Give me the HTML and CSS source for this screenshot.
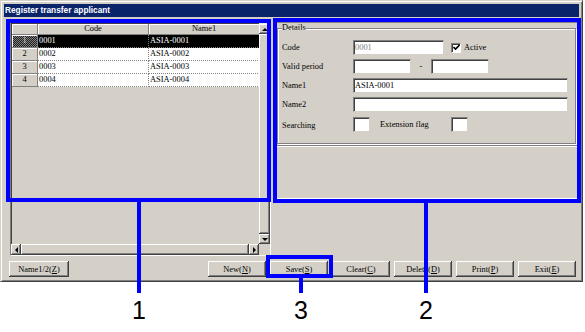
FILE: index.html
```html
<!DOCTYPE html>
<html lang="en">
<head>
  <meta charset="UTF-8">
  <title>Register transfer applicant</title>
  <link rel="stylesheet" href="styles.css">
</head>
<body>
  <div class="window">
    <div class="titlebar">Register transfer applicant</div>
    <div class="client">
      <div class="panes">

        <!-- list of applicants -->
        <div class="grid">
          <div class="cells">
            <div class="hd"></div>
            <div class="hd">Code</div>
            <div class="hd">Name1</div>

            <div class="rowhd current">1</div>
            <div class="cell sel">0001</div>
            <div class="cell sel">ASIA-0001</div>

            <div class="rowhd">2</div>
            <div class="cell">0002</div>
            <div class="cell">ASIA-0002</div>

            <div class="rowhd">3</div>
            <div class="cell">0003</div>
            <div class="cell">ASIA-0003</div>

            <div class="rowhd">4</div>
            <div class="cell">0004</div>
            <div class="cell">ASIA-0004</div>
          </div>
          <div class="vscroll">
            <span class="arrow up"></span>
            <span class="thumb"></span>
            <span class="arrow down"></span>
          </div>
          <div class="hscroll">
            <span class="arrow left"></span>
            <span class="thumb"></span>
            <span class="arrow right"></span>
          </div>
          <div class="sizebox"></div>
        </div>

        <!-- detail form -->
        <div class="details">
          <div class="details-top">
            <fieldset>
              <legend>Details</legend>
              <div class="form">
                <span class="lbl">Code</span>
                <div class="ctl">
                  <span class="field w-code dim">0001</span>
                  <span class="check"><svg width="7" height="7" viewBox="0 0 7 7"><path d="M0.5 3 L2.5 5 L6.5 1" fill="none" stroke="#000" stroke-width="1.6"/></svg></span>
                  <span>Active</span>
                </div>

                <span class="lbl">Valid period</span>
                <div class="ctl">
                  <span class="field w-date"></span>
                  <span class="dash">-</span>
                  <span class="field w-date"></span>
                </div>

                <span class="lbl">Name1</span>
                <div class="ctl"><span class="field w-name">ASIA-0001</span></div>

                <span class="lbl">Name2</span>
                <div class="ctl"><span class="field w-name"></span></div>

                <span class="lbl last">Searching</span>
                <div class="ctl last">
                  <span class="field w-flag"></span>
                  <span class="lbl-inline">Extension flag</span>
                  <span class="field w-flag"></span>
                </div>
              </div>
            </fieldset>
          </div>
        </div>
      </div>

      <div class="buttons">
        <button class="btn wide">Name1/2(<u>Z</u>)</button>
        <div class="btn-group">
          <button class="btn">New(<u>N</u>)</button>
          <button class="btn">Save(<u>S</u>)</button>
          <button class="btn">Clear(<u>C</u>)</button>
          <button class="btn">Delete(<u>D</u>)</button>
          <button class="btn">Print(<u>P</u>)</button>
          <button class="btn">Exit(<u>E</u>)</button>
        </div>
      </div>
    </div>
  </div>

  <!-- callouts -->
  <div class="mark mark-grid"></div>
  <div class="mark mark-details"></div>
  <div class="mark mark-save"></div>
  <div class="lead lead-1"></div>
  <div class="lead lead-2"></div>
  <div class="lead lead-3"></div>
  <span class="num num-1">1</span>
  <span class="num num-3">3</span>
  <span class="num num-2">2</span>
</body>
</html>
```

FILE: styles.css
```css
body {
  margin: 0;
  background: #fff;
  font-family: "Liberation Serif", serif;
  font-size: 8.4px;
  color: #000;
}

.window {
  position: relative;
  box-sizing: border-box;
  width: 583px;
  height: 282px;
  padding: 3px;
  background: #d4d0c8;
  border: 1px solid;
  border-color: #d4d0c8 #404040 #404040 #d4d0c8;
  box-shadow: inset 1px 1px #fff, inset -1px -1px #808080;
}

.titlebar {
  height: 13px;
  line-height: 13px;
  padding-left: 1px;
  background: #0a246a;
  color: #fff;
  font-family: "Liberation Sans", sans-serif;
  font-weight: bold;
  font-size: 8.3px;
}

.client {
  padding: 5px 0 0 6px;
}

.panes {
  display: flex;
  gap: 5px;
}

/* ---- grid ---- */
.grid {
  display: grid;
  grid-template-columns: 248px 11px;
  grid-template-rows: 221px 11px;
  width: 261px;
  height: 234px;
  box-sizing: border-box;
  border: 1px solid;
  border-color: #808080 #fff #fff #808080;
}

.cells {
  display: grid;
  grid-template-columns: 26px 111px 111px;
  grid-template-rows: 11px repeat(4, 13px);
  align-content: start;
  background: #d4d0c8;
  box-shadow: inset 1px 1px #404040;
  padding: 1px 0 0 1px;
}

.hd,
.rowhd {
  box-sizing: border-box;
  text-align: center;
  border-right: 1px solid #808080;
  border-bottom: 1px solid #808080;
  box-shadow: inset 1px 1px #fff;
  line-height: 11px;
}
.hd { line-height: 10px; }

.rowhd.current {
  color: #d4d0c8;
  background: repeating-conic-gradient(#808080 0 25%, #202020 0 50%) 0 0 / 2px 2px;
}

.cell {
  box-sizing: border-box;
  background: #fff;
  padding-left: 1px;
  line-height: 12px;
  border-right: 1px dotted #808080;
  border-bottom: 1px dotted #808080;
}
.cell.sel {
  background: #000;
  color: #fff;
}

.vscroll,
.hscroll {
  display: flex;
  background: #ebe9e3;
}
.vscroll { flex-direction: column; padding-top: 1px; }

.arrow,
.thumb,
.sizebox {
  box-sizing: border-box;
  background: #d4d0c8;
  box-shadow: inset -1px -1px #404040, inset 1px 1px #fff, inset -2px -2px #808080;
}
.vscroll .arrow { height: 10px; }
.hscroll .arrow { width: 10px; }
.thumb { flex: 1; }

.arrow {
  display: flex;
  align-items: center;
  justify-content: center;
}
.arrow::after {
  content: "";
  width: 0;
  height: 0;
  border: 3px solid transparent;
}
.arrow.up::after { border-bottom-color: #000; border-top-width: 0; }
.arrow.down::after { border-top-color: #000; border-bottom-width: 0; }
.arrow.left::after { border-right-color: #000; border-left-width: 0; }
.arrow.right::after { border-left-color: #000; border-right-width: 0; }

.sizebox { box-shadow: none; }

/* ---- details ---- */
.details {
  box-sizing: border-box;
  width: 303px;
  height: 177px;
  border: 1px solid;
  border-color: #808080 #fff #fff #808080;
}

.details-top {
  box-sizing: border-box;
  height: 123px;
  border-bottom: 1px solid #808080;
  box-shadow: 0 1px #fff;
}

fieldset {
  box-sizing: border-box;
  width: 299px;
  height: 121px;
  margin: 0;
  padding: 7px 4px 0 4px;
  border: 1px solid #808080;
  box-shadow: 1px 1px #fff, inset 1px 1px #fff;
}
legend {
  padding: 0;
  line-height: 10px;
}

.form {
  display: grid;
  grid-template-columns: 71px auto;
  grid-auto-rows: 15px;
  row-gap: 4px;
}
.lbl {
  line-height: 15px;
}
.ctl {
  display: flex;
  align-items: center;
}
.last { margin-top: 2px; }

.field {
  box-sizing: border-box;
  height: 15px;
  line-height: 13px;
  padding-left: 1px;
  background: #fff;
  border: 1px solid;
  border-color: #808080 #d4d0c8 #d4d0c8 #808080;
  box-shadow: inset 1px 1px #404040;
}
.field.dim { color: #808080; }
.w-code { width: 91px; }
.w-date { width: 58px; }
.w-name { width: 215px; }
.w-flag { width: 17px; }

.dash {
  width: 20px;
  text-align: center;
}

.check {
  display: flex;
  align-items: center;
  justify-content: center;
  box-sizing: border-box;
  width: 10px;
  height: 10px;
  margin: 0 3px 0 7px;
  background: #fff;
  border: 1px solid;
  border-color: #808080 #fff #fff #808080;
  box-shadow: inset 1px 1px #404040;
}

.lbl-inline {
  width: 71px;
  margin-left: 10px;
}

/* ---- buttons ---- */
.buttons {
  display: flex;
  justify-content: space-between;
  margin: 5px 3px 0 -1px;
}
.btn-group {
  display: flex;
  gap: 4px;
}
.btn {
  box-sizing: border-box;
  width: 58px;
  height: 16px;
  padding: 0;
  font-family: "Liberation Serif", serif;
  font-size: 8.4px;
  color: #000;
  background: #d4d0c8;
  border: none;
  box-shadow: inset -1px -1px #404040, inset 1px 1px #fff, inset -2px -2px #808080;
}
.btn.wide { width: 60px; }

/* ---- callouts ---- */
.mark {
  position: absolute;
  box-sizing: border-box;
  border: 4px solid #00f;
}
.mark-grid { left: 6px; top: 19px; width: 265px; height: 183px; }
.mark-details { left: 273px; top: 18px; width: 308px; height: 185px; }
.mark-save { left: 266px; top: 255px; width: 67px; height: 23px; }

.lead {
  position: absolute;
  width: 4px;
  background: #00f;
}
.lead-1 { left: 137px; top: 202px; height: 91px; }
.lead-2 { left: 424px; top: 203px; height: 90px; }
.lead-3 { left: 299px; top: 278px; height: 15px; }

.num {
  position: absolute;
  top: 296px;
  font-family: "Liberation Sans", sans-serif;
  font-size: 25px;
  line-height: 28px;
}
.num-1 { left: 132px; }
.num-3 { left: 294px; }
.num-2 { left: 419px; }
```
